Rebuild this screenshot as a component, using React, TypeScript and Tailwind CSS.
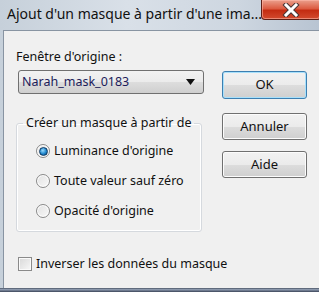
import React from 'react'

const font = { fontFamily: '"Noto Sans", "Open Sans", sans-serif' }

const Radio = ({ checked, label }: { checked?: boolean; label: string }) => {
  return (
    <div className="flex items-center h-[30px]">
      <span className="shrink-0 w-[14px] h-[14px] rounded-full border border-[#8a8a8a] bg-gradient-to-br from-[#e2e2e2] to-[#f8f8f8] flex items-center justify-center shadow-[inset_0_0_0_1px_#fff]">
        {checked && (
          <span className="w-[9px] h-[9px] rounded-full bg-[radial-gradient(circle_at_40%_35%,#9adcff,#1f86cc_55%,#0b3f72)] border border-[#0d3b66]" />
        )}
      </span>
      <span className="ml-[4px] text-[12.5px] leading-[18px] text-[#111] whitespace-nowrap">{label}</span>
    </div>
  )
}

const Button = ({ label, primary }: { label: string; primary?: boolean }) => {
  return (
    <div
      className={
        primary
          ? 'w-[85px] h-[28px] rounded-[3px] border border-[#3c7fb1] shadow-[inset_0_0_0_1px_#a8e0fb] bg-[linear-gradient(#f2f2f2,#ebebeb_50%,#dddddd_50%,#cfcfcf)] flex items-center justify-center text-[13px] text-[#111]'
          : 'w-[85px] h-[27px] rounded-[3px] border border-[#707070] shadow-[inset_0_0_0_1px_#fcfcfc] bg-[linear-gradient(#f2f2f2,#ebebeb_50%,#dddddd_50%,#cfcfcf)] flex items-center justify-center text-[13px] text-[#111]'
      }
    >
      {label}
    </div>
  )
}

const App = () => {
  return (
    <div
      className="w-[319px] h-[292px] overflow-hidden flex flex-col bg-[linear-gradient(90deg,#c6d0da,#d9e0e8_40%,#cdd6e0_75%,#b8c4d2)]"
      style={font}
    >
      {/* title bar */}
      <div className="h-[30px] flex items-start shrink-0">
        <div className="flex-1 min-w-0 overflow-hidden pl-[7px] pt-[4px] text-[14px] leading-[20px] text-[#111] whitespace-nowrap">
          Ajout d'un masque à partir d'une ima...
        </div>
        <div className="shrink-0 w-[60px] h-[20px] mr-[-2px] rounded-b-[4px] border border-t-0 border-[#5e1f16] bg-[linear-gradient(#eba08d,#dc5c42_45%,#c42c12_55%,#d34a2e)] shadow-[inset_0_0_0_1px_rgba(255,190,175,0.55)] flex items-center justify-center">
          <svg width="18" height="14" viewBox="0 0 18 14">
            <path d="M4 2 L14 12 M14 2 L4 12" stroke="#4a3535" strokeWidth="5" strokeLinecap="square" />
            <path d="M4 2 L14 12 M14 2 L4 12" stroke="#fff" strokeWidth="3" strokeLinecap="square" />
          </svg>
        </div>
      </div>

      {/* client area */}
      <div className="flex-1 ml-[3px] border-l border-t border-[#8894a2] bg-[#f0f0f0] flex">
        <div className="ml-[12px] w-[188px] shrink-0 flex flex-col">
          <div className="mt-[17px] h-[18px] text-[12.5px] leading-[18px] text-[#111]">Fenêtre d'origine :</div>
          <div className="mt-[4px] ml-[2px] w-[186px] h-[24px] rounded-[3px] border border-[#707070] bg-[linear-gradient(#f2f2f2,#ebebeb_50%,#dddddd_50%,#cfcfcf)] flex items-center pl-[3px] pr-[8px]">
            <span className="text-[12.5px] text-[#1c1c5a]">Narah_mask_0183</span>
            <svg className="ml-auto" width="9" height="6" viewBox="0 0 9 6">
              <path d="M0 0 H9 L4.5 6 Z" fill="#111" />
            </svg>
          </div>
          <fieldset className="mt-[20px] w-[186px] h-[118px] rounded-[3px] border border-[#d5d9de] shadow-[inset_0_0_0_1px_#fff]">
            <legend className="ml-[6px] px-[3px] text-[12.5px] leading-[18px] text-[#111] whitespace-nowrap">Créer un masque à partir de</legend>
            <div className="mt-[4px] pl-[19px] flex flex-col">
              <Radio checked label="Luminance d'origine" />
              <Radio label="Toute valeur sauf zéro" />
              <Radio label="Opacité d'origine" />
            </div>
          </fieldset>
          <div className="mt-[23px] ml-[2px] flex items-center">
            <span className="block shrink-0 w-[14px] h-[14px] border border-[#8a8a8a] bg-gradient-to-br from-[#d8d8d8] to-[#f8f8f8] shadow-[inset_0_0_0_1px_#fafafa]" />
            <span className="ml-[4px] text-[12.5px] leading-[18px] text-[#111] whitespace-nowrap">Inverser les données du masque</span>
          </div>
        </div>
        <div className="ml-[18px] mt-[40px] flex flex-col">
          <Button primary label="OK" />
          <div className="mt-[14px]">
            <Button label="Annuler" />
          </div>
          <div className="mt-[11px]">
            <Button label="Aide" />
          </div>
        </div>
      </div>
      <div className="h-[4px] shrink-0 bg-[linear-gradient(#4b5566,#8e9bb0_40%,#3a4458)]" />
    </div>
  )
}

export default App
